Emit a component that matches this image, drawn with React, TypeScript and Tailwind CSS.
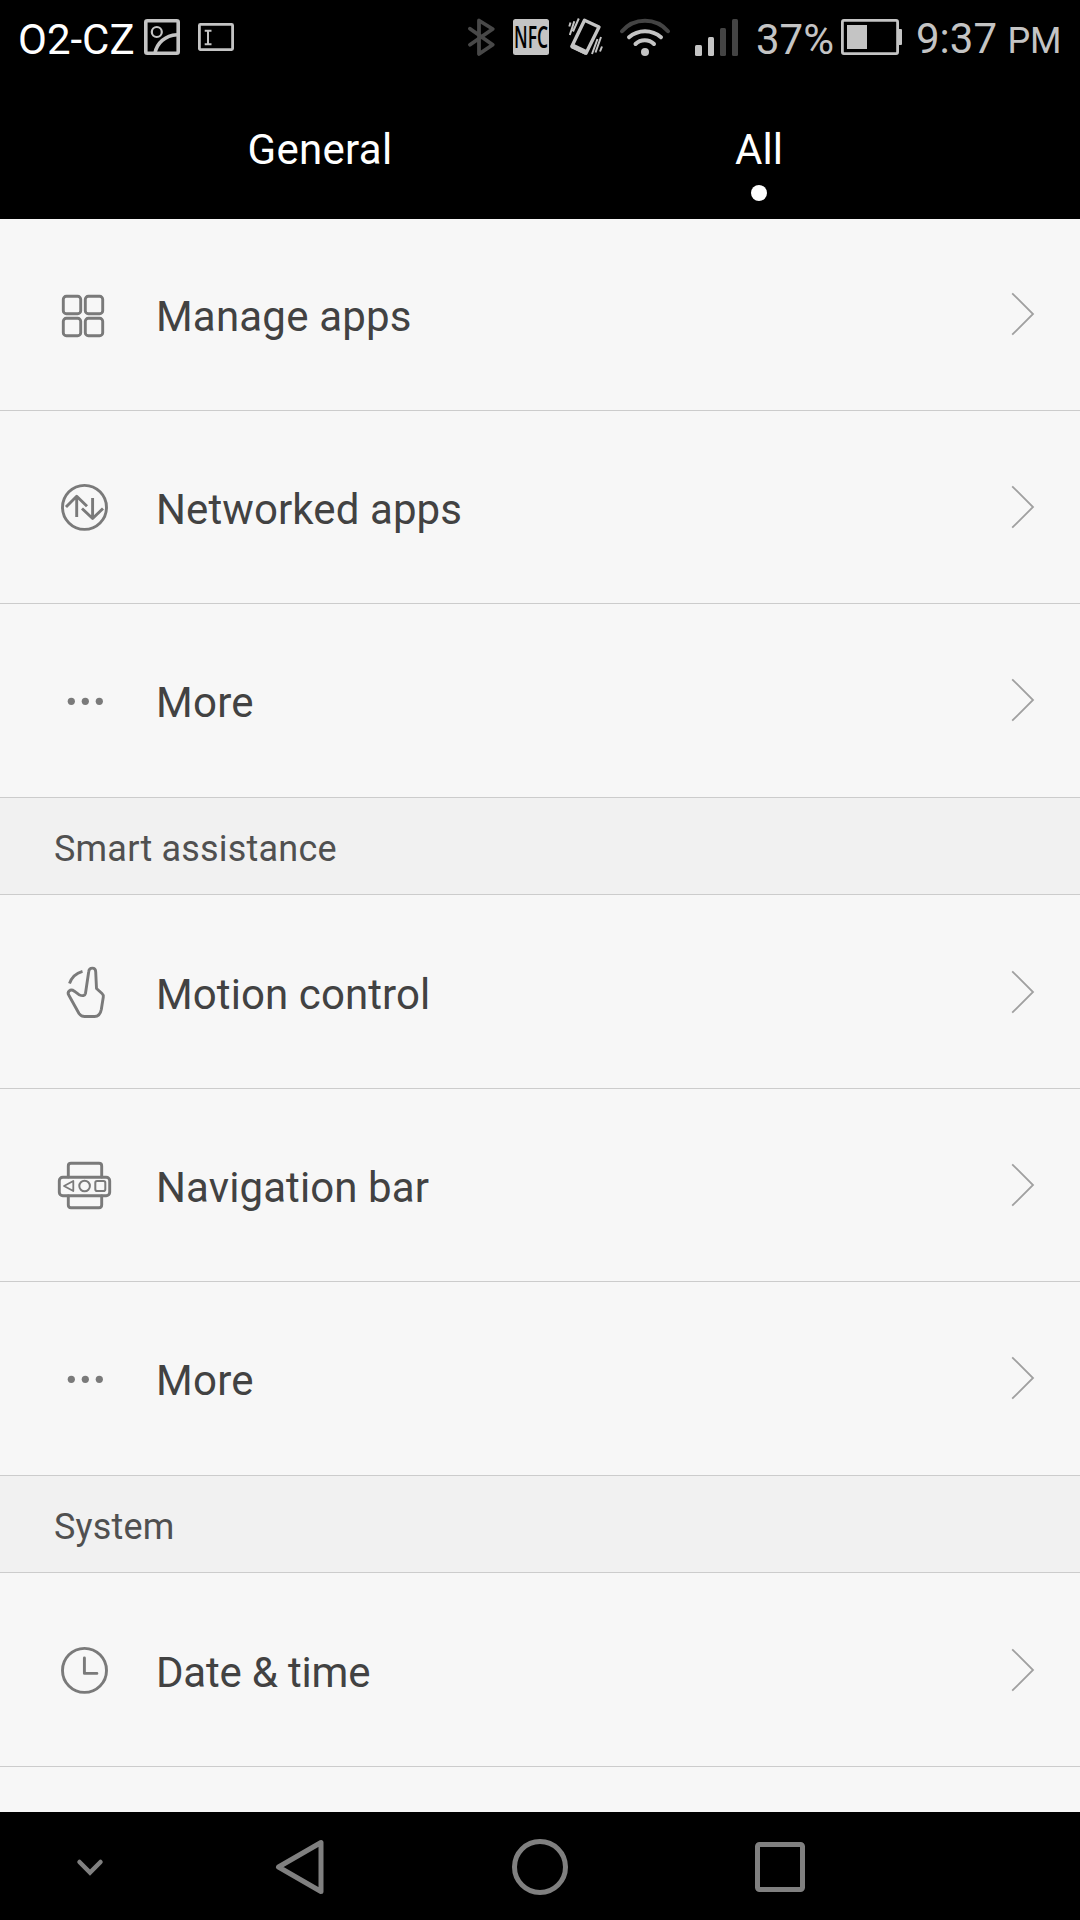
import { ReactNode } from "react";

interface SettingItem {
  label: string;
  icon: ReactNode;
  size: string;
}

interface SettingSection {
  title?: string;
  items: SettingItem[];
}

function ListIcon({ children }: { children: ReactNode }) {
  return (
    <svg
      viewBox="0 0 60 60"
      className="w-[60px] h-[60px] ml-[54px] mb-[66px] shrink-0"
      fill="none"
      stroke="#7a7a7a"
      strokeWidth="2.9"
      strokeLinecap="round"
      strokeLinejoin="round"
    >
      {children}
    </svg>
  );
}

const AppsIcon = () => (
  <ListIcon>
    <rect x="9.3" y="12.3" width="17.4" height="17.4" rx="3" />
    <rect x="31.3" y="12.3" width="17.4" height="17.4" rx="3" />
    <rect x="9.3" y="34.3" width="17.4" height="17.4" rx="3" />
    <rect x="31.3" y="34.3" width="17.4" height="17.4" rx="3" />
  </ListIcon>
);

const NetworkIcon = () => (
  <ListIcon>
    <circle cx="30.5" cy="30.4" r="22" />
    <path d="M22.7 40V18.7M12 30l10.700-10.700L33 29.300M38.600 21v20.500M28 31.500l10.600 10L49 31.500" strokeLinecap="butt" />
  </ListIcon>
);

const DotsIcon = () => (
  <ListIcon>
    <g fill="#7a7a7a" stroke="none">
      <circle cx="17.3" cy="31.3" r="3.6" />
      <circle cx="31.3" cy="31.3" r="3.6" />
      <circle cx="45.3" cy="31.3" r="3.6" />
    </g>
  </ListIcon>
);

const MotionIcon = () => (
  <ListIcon>
    <path d="M15.5 21.5C17.5 15.5 22.5 11 28.5 9.3" strokeLinecap="butt" />
    <path d="M31.5 31.3L34.7 9.7C35.2 4.9 41.5 4.9 41.7 9.7L42.5 26.5L48 31.5Q49.7 33 49.3 35L47.3 47.5Q46 54.5 40.5 54.5H30.5Q27 54.5 25 51.5L15 33.5C12.5 29.5 16.5 26.5 20.3 29.2L25 32.7Q30.5 35.2 31.5 31.3Z" />
  </ListIcon>
);

const NavigationIcon = () => (
  <ListIcon>
    <path d="M14.3 22V11Q14.3 8.3 17 8.3H45Q47.7 8.3 47.7 11V22M14.3 41V50Q14.3 52.7 17 52.7H45Q47.7 52.7 47.7 50V41" />
    <rect x="5.3" y="22.3" width="50.4" height="18.4" rx="3.5" />
    <path d="M10 31L19.3 26V36Z" strokeWidth="1.8" />
    <circle cx="30.6" cy="31" r="5.3" strokeWidth="2" />
    <rect x="41.3" y="26" width="10" height="10" rx="1.8" strokeWidth="2" />
  </ListIcon>
);

const ClockIcon = () => (
  <ListIcon>
    <circle cx="30.5" cy="30.4" r="22" />
    <path d="M30.4 18v15.4h12.5" />
  </ListIcon>
);

const sections: SettingSection[] = [
  {
    items: [
      { label: "Manage apps", icon: <AppsIcon />, size: "h-[192px] tracking-[0.2px]" },
      { label: "Networked apps", icon: <NetworkIcon />, size: "h-[193px] tracking-[0.1px]" },
      { label: "More", icon: <DotsIcon />, size: "h-[194px] pb-px tracking-[0.3px]" },
    ],
  },
  {
    title: "Smart assistance",
    items: [
      { label: "Motion control", icon: <MotionIcon />, size: "h-[194px] tracking-[0.1px]" },
      { label: "Navigation bar", icon: <NavigationIcon />, size: "h-[193px] tracking-[0.1px]" },
      { label: "More", icon: <DotsIcon />, size: "h-[194px] pb-px tracking-[0.3px]" },
    ],
  },
  {
    title: "System",
    items: [{ label: "Date & time", icon: <ClockIcon />, size: "h-[194px] tracking-[-0.2px]" }],
  },
];

function StatusBar() {
  return (
    <div className="flex items-center h-[74px] shrink-0 text-[42px] leading-[50px] text-[#c4c4c4] whitespace-nowrap">
      <span className="w-[125px] ml-[18px] pt-[5px] text-white">O2-CZ</span>
      <svg viewBox="0 0 38 40" className="w-[38px] h-10 shrink-0" fill="none" stroke="#c4c4c4">
        <rect x="2.8" y="3.8" width="32.4" height="32.4" rx="1.5" strokeWidth="3.6" />
        <circle cx="13.8" cy="15" r="5" strokeWidth="2.2" />
        <path d="M12 36C14 26 22 18.5 34 17.7" strokeWidth="3.6" />
      </svg>
      <svg viewBox="0 0 38 40" className="w-[38px] h-10 ml-4 shrink-0" fill="none" stroke="#c4c4c4">
        <rect x="2.4" y="7.4" width="33.2" height="25.2" rx="1" strokeWidth="2.8" />
        <path d="M7.7 13.7h6.8M7.7 27.2h6.8M11 13.7v13.5" strokeWidth="2" />
      </svg>
      <svg viewBox="0 0 28 40" className="w-7 h-10 ml-[232px] shrink-0" fill="none" stroke="#484848" strokeWidth="3.8" strokeLinecap="round" strokeLinejoin="round">
        <path d="M3 11.7L25.7 27.7L12 37V3.5L25.7 12L3 27.7" />
      </svg>
      <svg viewBox="0 0 38 40" className="w-[38px] h-10 ml-[17px] shrink-0 overflow-visible">
        <rect x="1" y="2" width="36" height="36" rx="2.5" fill="#c4c4c4" />
        <text x="2" y="31" fontSize="30" fontWeight="600" textLength="34" lengthAdjust="spacingAndGlyphs" className="font-['Open_Sans',sans-serif]">
          NFC
        </text>
      </svg>
      <svg viewBox="0 0 36 40" className="w-9 h-10 ml-[18px] shrink-0" fill="none" stroke="#c4c4c4" strokeLinejoin="round">
        <path d="M16.5 3.3L31 10L18 36.3L3.8 29.5Z" strokeWidth="3.4" />
        <path d="M4 28.800L18.200 35.600" strokeWidth="5" />
        <path d="M10.8 1.5L5 14.5M6.3 4.300L1.800 18M2.500 5.500L1.300 9.500M29.500 22L24 37M33 20L27.500 35.500M34 29.500L32 34.500" strokeWidth="2" />
      </svg>
      <svg viewBox="0 0 52 40" className="w-[52px] h-10 ml-[15px] shrink-0" fill="none" stroke="#c4c4c4" strokeWidth="4" strokeLinecap="round">
        <path d="M3 14.2A30.6 30.6 0 0 1 49 14.2" stroke="#444444" />
        <path d="M10 20.3A24.2 24.2 0 0 1 42 20.3" />
        <path d="M16.5 27A13 13 0 0 1 35 27" />
        <circle cx="26" cy="35" r="4" fill="#c4c4c4" stroke="none" />
      </svg>
      <svg viewBox="0 0 46 40" className="w-[46px] h-10 ml-[23px] shrink-0" fill="#c4c4c4">
        <rect x="1" y="28" width="7" height="11" rx="1.5" />
        <rect x="14" y="20" width="6" height="19" rx="1.5" />
        <rect x="26" y="11" width="6" height="28" rx="1.5" fill="#444444" />
        <rect x="38" y="2" width="6" height="37" rx="1.5" fill="#444444" />
      </svg>
      <span className="w-[84px] ml-4 pt-[5px]">37%</span>
      <svg viewBox="0 0 62 40" className="w-[62px] h-10 shrink-0">
        <rect x="2.4" y="3.4" width="55.2" height="33.2" rx="1.5" fill="none" stroke="#c4c4c4" strokeWidth="2.8" />
        <rect x="7" y="8" width="20" height="24" fill="#c4c4c4" />
        <rect x="58" y="12" width="4" height="16" rx="1" fill="#c4c4c4" />
      </svg>
      <span className="ml-[14px] pt-[5px]">
        9:37 <span className="text-[36px]">PM</span>
      </span>
    </div>
  );
}

function Tabs() {
  return (
    <div className="flex h-[145px] shrink-0 px-[100px] pt-[51px] text-[42px] leading-[50px] text-white">
      <div className="flex flex-col items-center w-[440px] tracking-[0.3px]">General</div>
      <div className="flex flex-col items-center w-[438px]">
        All
        <span className="w-4 h-4 mt-[10px] rounded-full bg-white" />
      </div>
    </div>
  );
}

function Row({ item }: { item: SettingItem }) {
  return (
    <div className={`flex items-end border-b border-[#cccccc] ${item.size}`}>
      {item.icon}
      <span className="ml-[42px] mb-[68px] text-[42px] leading-[50px] text-[#424242]">{item.label}</span>
      <svg viewBox="0 0 24 44" className="w-6 h-11 ml-auto mr-[45px] mb-[74px]" fill="none" stroke="#a0a0a0" strokeWidth="1.8">
        <path d="M1.2 1.3L22 22L1.2 42.7" />
      </svg>
    </div>
  );
}

function NavBar() {
  return (
    <div className="grid grid-cols-[180px_240px_240px_240px_180px] items-center justify-items-center h-[108px] shrink-0 pt-0.5 bg-black">
      <svg viewBox="0 0 60 60" className="w-[60px] h-[60px]" fill="none" stroke="#808080" strokeWidth="4.5" strokeLinecap="round">
        <path d="M19.5 25L30 35.5L40.5 25" />
      </svg>
      <svg viewBox="0 0 60 60" className="w-[60px] h-[60px]" fill="none" stroke="#808080" strokeWidth="5" strokeLinejoin="round">
        <path d="M8.5 30L51 5.5V54.5Z" />
      </svg>
      <svg viewBox="0 0 60 60" className="w-[60px] h-[60px]" fill="none" stroke="#808080" strokeWidth="5">
        <circle cx="30" cy="30" r="25.5" />
      </svg>
      <svg viewBox="0 0 60 60" className="w-[60px] h-[60px]" fill="none" stroke="#808080" strokeWidth="5">
        <rect x="7.5" y="7.5" width="45" height="45" rx="2" />
      </svg>
    </div>
  );
}

export default function App() {
  return (
    <div className="flex flex-col w-[1080px] h-[1920px] overflow-hidden bg-black font-[Roboto,sans-serif]">
      <StatusBar />
      <Tabs />
      <div className="flex-1 bg-[#f7f7f7] overflow-hidden">
        {sections.map((section, i) => (
          <div key={i}>
            {section.title && (
              <h2 className="h-[97px] pl-[54px] pt-[27px] border-b border-[#cccccc] bg-[#f1f1f1] text-[36px] leading-[48px] tracking-[0.2px] text-[#505050]">
                {section.title}
              </h2>
            )}
            {section.items.map((item, j) => (
              <Row key={j} item={item} />
            ))}
          </div>
        ))}
      </div>
      <NavBar />
    </div>
  );
}
